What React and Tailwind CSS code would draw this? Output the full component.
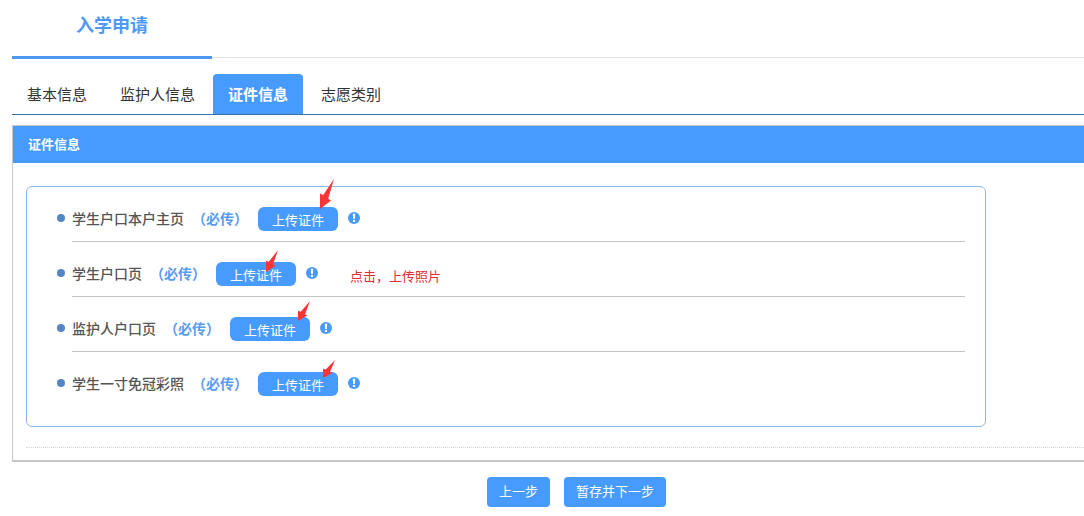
const tabs = ["基本信息", "监护人信息", "证件信息", "志愿类别"];

const documents = [
  { name: "学生户口本户主页", arrow: "left-[62px] -top-7 w-[14px] h-[30px]" },
  { name: "学生户口页", arrow: "left-[50px] -top-3 w-3 h-[22px]", note: "点击，上传照片" },
  { name: "监护人户口页", arrow: "left-[68px] -top-4 w-3 h-5" },
  { name: "学生一寸免冠彩照", arrow: "left-[65px] -top-3 w-3 h-[18px]" },
];

function Arrow({ className }) {
  return (
    <svg
      className={`absolute pointer-events-none ${className}`}
      viewBox="0 0 14 30"
      preserveAspectRatio="none"
      aria-hidden="true"
    >
      <path d="M14 0 L3.2 16 L0 14.5 L0 30 L11 21.5 L8.2 19.8 Z" fill="#fb3438" />
    </svg>
  );
}

function InfoIcon() {
  return (
    <svg className="w-3 h-3 mb-[2px]" viewBox="0 0 12 12" aria-hidden="true">
      <circle cx="6" cy="6" r="6" fill="#479bff" />
      <path d="M4.8 1.8h2.4l-.3 5.1H5.1z" fill="#fff" />
      <rect x="4.9" y="8" width="2.2" height="2" fill="#fff" />
    </svg>
  );
}

export default function App() {
  return (
    <main className="min-h-screen bg-white pl-3 overflow-x-hidden font-['Noto_Sans_CJK_SC',sans-serif]">

      {/* Page title */}
      <header className="flex h-[59px]">
        <h1 className="w-[200px] pb-2 flex items-center justify-center border-b-3 border-[#4f99f0] text-lg font-bold text-[#4f99f9]">
          入学申请
        </h1>
        <div className="flex-1 border-b border-[#e3e3e3] mb-px" />
      </header>

      {/* Tabs */}
      <nav className="mt-[15px] flex gap-[3px] border-b border-[#3a70ab]">
        {tabs.map((t) => (
          <a
            key={t}
            href="#"
            className={
              t === "证件信息"
                ? "px-[15px] h-10 leading-10 text-[15px] font-bold text-white bg-[#479bff] rounded-t -mb-px"
                : "px-[15px] h-10 leading-10 text-[15px] text-[#333]"
            }
          >
            {t}
          </a>
        ))}
      </nav>

      {/* Documents */}
      <section className="mt-[10px] border-l border-b-2 border-t border-[#c6c6c6]">
        <h2 className="h-[37px] leading-[35px] pl-[15px] text-[13px] font-bold text-white bg-[#479bff]">
          证件信息
        </h2>
        <div className="pt-[23px] pl-[13px] pb-3">
          <ul className="max-w-[960px] pl-[30px] pr-5 pb-5 border border-[#8db8e6] rounded-md">
            {documents.map((d) => (
              <li key={d.name} className="group flex gap-[7px]">
                <span className="w-2 h-2 mt-[27px] rounded-full bg-[#5287c4]" />
                <div className="flex-1 flex items-center pt-5 pb-[10px] border-b border-[#c4c4c8] group-last:border-b-0">
                  <span className="pb-[2px] text-sm leading-[22px] font-medium text-[#555]">{d.name}</span>
                  <span className="ml-2 pb-[2px] text-sm leading-[22px] font-bold text-[#5a9bf2]">（必传）</span>
                  <span className="relative ml-[10px]">
                    <button className="block w-20 h-6 pt-[2px] leading-[22px] text-[13px] text-white bg-[#479bff] rounded-md">
                      上传证件
                    </button>
                    <Arrow className={d.arrow} />
                  </span>
                  <span className="ml-[10px]">
                    <InfoIcon />
                  </span>
                  {d.note && <span className="ml-8 pt-1 text-[13px] leading-5 text-[#e02d35]">{d.note}</span>}
                </div>
              </li>
            ))}
          </ul>
          <div className="mt-5 border-b border-dotted border-[#d4d4d4]" />
        </div>
      </section>

      {/* Actions */}
      <div className="mt-[15px] pl-[57px] flex justify-center gap-[14px]">
        <button className="h-[30px] px-3 pb-[2px] text-[13px] text-white bg-[#479bff] rounded">上一步</button>
        <button className="h-[30px] px-3 pb-[2px] text-[13px] text-white bg-[#479bff] rounded">暂存并下一步</button>
      </div>
    </main>
  );
}
